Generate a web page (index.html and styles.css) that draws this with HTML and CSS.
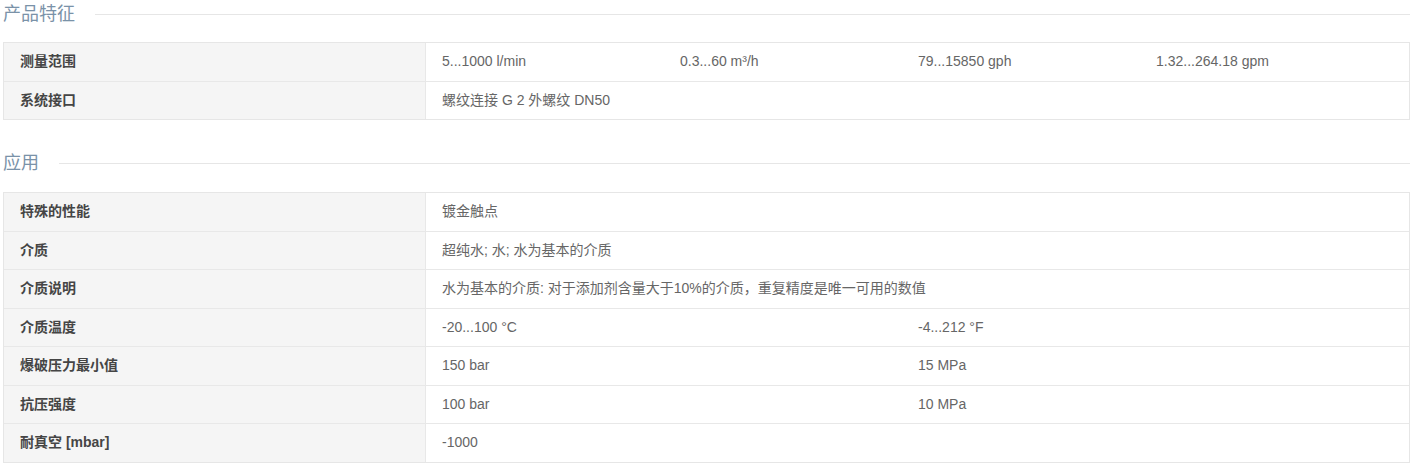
FILE: index.html
```html
<!DOCTYPE html>
<html lang="zh-CN">
<head>
<meta charset="utf-8">
<title>产品特征</title>
<link rel="stylesheet" href="styles.css">
</head>
<body>
<div class="page">
  <section class="section">
    <h2 class="section-title"><span>产品特征</span></h2>
    <div class="spec">
      <div class="row">
        <div class="label">测量范围</div>
        <div class="val">5...1000 l/min</div>
        <div class="val">0.3...60 m³/h</div>
        <div class="val">79...15850 gph</div>
        <div class="val">1.32...264.18 gpm</div>
      </div>
      <div class="row">
        <div class="label">系统接口</div>
        <div class="val span4">螺纹连接 G 2 外螺纹 DN50</div>
      </div>
    </div>
  </section>
  <section class="section second">
    <h2 class="section-title"><span>应用</span></h2>
    <div class="spec">
      <div class="row">
        <div class="label">特殊的性能</div>
        <div class="val span4">镀金触点</div>
      </div>
      <div class="row">
        <div class="label">介质</div>
        <div class="val span4">超纯水; 水; 水为基本的介质</div>
      </div>
      <div class="row">
        <div class="label">介质说明</div>
        <div class="val span4">水为基本的介质: 对于添加剂含量大于10%的介质，重复精度是唯一可用的数值</div>
      </div>
      <div class="row">
        <div class="label">介质温度</div>
        <div class="val span2">-20...100 °C</div>
        <div class="val span2">-4...212 °F</div>
      </div>
      <div class="row">
        <div class="label">爆破压力最小值</div>
        <div class="val span2">150 bar</div>
        <div class="val span2">15 MPa</div>
      </div>
      <div class="row">
        <div class="label">抗压强度</div>
        <div class="val span2">100 bar</div>
        <div class="val span2">10 MPa</div>
      </div>
      <div class="row">
        <div class="label">耐真空 [mbar]</div>
        <div class="val span4">-1000</div>
      </div>
    </div>
  </section>
</div>
</body>
</html>
```

FILE: styles.css
```css
html, body {
  margin: 0;
  padding: 0;
  background: #ffffff;
}
body {
  font-family: "Liberation Sans", Arial, "Noto Sans CJK SC", sans-serif;
  font-size: 14px;
  color: #666666;
}
.page {
  padding: 0 8px 0 3px;
}
.section-title {
  display: flex;
  align-items: center;
  gap: 20px;
  height: 28px;
  margin: 0 0 14px 0;
  font-size: 18px;
  font-weight: normal;
  color: #7a92a8;
  line-height: 28px;
}
.section-title::after {
  content: "";
  flex: 1;
  height: 1px;
  background: #e6e6e6;
}
.second {
  margin-top: 29px;
}
.second .section-title {
  margin-bottom: 15px;
}
.spec {
  border: 1px solid #e6e6e6;
}
.row {
  display: grid;
  grid-template-columns: 422px 238px 238px 238px 1fr;
  border-bottom: 1px solid #e8e8e8;
}
.row:last-child {
  border-bottom: none;
}
.label {
  background: #f5f5f5;
  border-right: 1px solid #e8e8e8;
  padding: 10px 16px;
  line-height: 17.5px;
  font-weight: bold;
  color: #454545;
}
.val {
  padding: 10px 16px;
  line-height: 17.5px;
  color: #666666;
}
.span2 {
  grid-column: span 2;
}
.span4 {
  grid-column: span 4;
}
```
